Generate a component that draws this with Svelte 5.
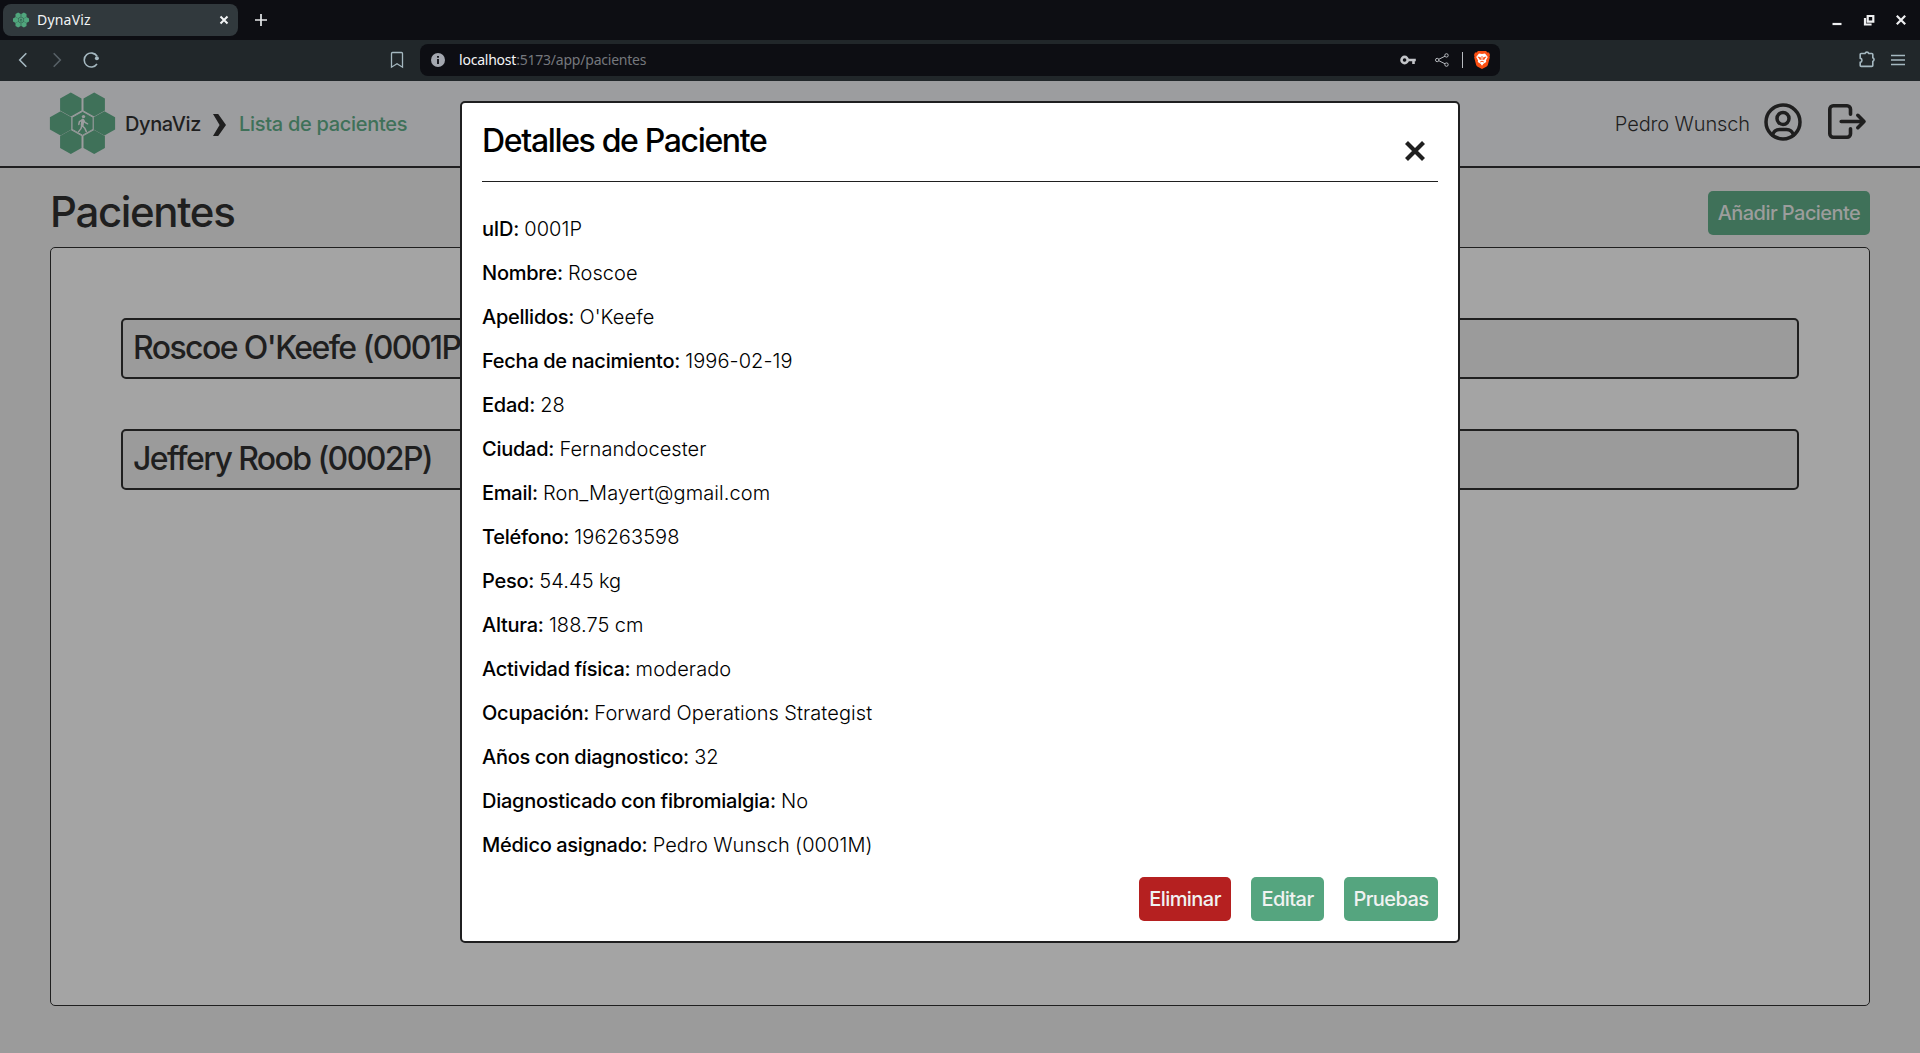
<script>
  const details = [
    ['uID', '0001P'],
    ['Nombre', 'Roscoe'],
    ['Apellidos', "O'Keefe"],
    ['Fecha de nacimiento', '1996-02-19'],
    ['Edad', '28'],
    ['Ciudad', 'Fernandocester'],
    ['Email', 'Ron_Mayert@gmail.com'],
    ['Teléfono', '196263598'],
    ['Peso', '54.45 kg'],
    ['Altura', '188.75 cm'],
    ['Actividad física', 'moderado'],
    ['Ocupación', 'Forward Operations Strategist'],
    ['Años con diagnostico', '32'],
    ['Diagnosticado con fibromialgia', 'No'],
    ['Médico asignado', 'Pedro Wunsch (0001M)']
  ];
  const patients = ["Roscoe O'Keefe (0001P)", 'Jeffery Roob (0002P)'];
  const cells = [[20.8, 12.5], [44.2, 12.5], [10.6, 31.3], [32.6, 31.3], [54.4, 31.3], [20.8, 50], [44.2, 50]];
  const hex = ([x, y]) =>
    `${x},${y - 12.1} ${x + 10.7},${y - 6.1} ${x + 10.7},${y + 6.1} ${x},${y + 12.1} ${x - 10.7},${y + 6.1} ${x - 10.7},${y - 6.1}`;
</script>

{#snippet logo()}
  <svg class="logo" viewBox="0 0 65 62.5">
    {#each cells as cell}<polygon points={hex(cell)} />{/each}
    <polygon class="ring" points="32.6,19.4 43.1,25.3 43.1,37.3 32.6,43.2 22.1,37.3 22.1,25.3" />
    <g class="walker">
      <circle cx="33.5" cy="24.6" r="1.7" />
      <path d="M32.6 27.6L31.8 33.2L34.8 36.2L36.3 39.6M31.8 33.5L31 36.6L28.6 39.6M32.4 27.8L29.4 29.6L28.8 32.4M33.4 28L34.9 30.4L37.6 31.8" />
      <path class="torso" d="M32.8 28.2L32.2 33" />
    </g>
  </svg>
{/snippet}

<div class="window">
  <div class="tabs">
    <div class="tab">
      {@render logo()}
      <span>DynaViz</span>
      <svg class="tab-close" viewBox="0 0 10 10"><path d="M1.5 1.5l7 7M8.5 1.5l-7 7" /></svg>
    </div>
    <svg class="plus" viewBox="0 0 12 12"><path d="M6 0v12M0 6h12" /></svg>
    <div class="controls">
      <svg viewBox="0 0 12 12"><path d="M1.5 10h9" /></svg>
      <svg viewBox="0 0 12 12"><path d="M4.7 2h5.6v5.6H4.7zM2 4v6.5h6.6" /></svg>
      <svg viewBox="0 0 12 12"><path d="M1.8 1.8l8.4 8.4M10.2 1.8l-8.4 8.4" /></svg>
    </div>
  </div>

  <div class="toolbar">
    <div class="nav">
      <svg viewBox="0 0 16 16"><path d="M11.3 1.2L4.7 8l6.6 6.8" /></svg>
      <svg class="dim" viewBox="0 0 16 16"><path d="M4.7 1.2L11.3 8l-6.6 6.8" /></svg>
      <svg viewBox="0 0 16 16"><path d="M14.1 4.2A7 7 0 1 0 14 12" /><circle class="solid" cx="13.9" cy="6.2" r="2" /></svg>
    </div>
    <svg class="bookmark" viewBox="0 0 16 18"><path d="M3.5 1.5h9a1 1 0 0 1 1 1v13.7L8 12.8l-5.5 3.4V2.5a1 1 0 0 1 1-1z" /></svg>
    <div class="address">
      <svg class="info" viewBox="0 0 14 14"><circle cx="7" cy="7" r="7" /><path d="M7 6v5M7 3v1.8" /></svg>
      <span class="url"><b>localhost</b>:5173/app/pacientes</span>
      <svg class="key" viewBox="0 0 16 10"><circle cx="4.6" cy="5" r="3.1" /><path d="M7 5h8.8M13.5 5v4" /></svg>
      <svg class="share" viewBox="0 0 14 14"><circle cx="2.2" cy="7" r="1.7" /><circle cx="11.5" cy="2.4" r="1.7" /><circle cx="11.5" cy="11.6" r="1.7" /><path d="M3.8 6.3l6.2-3.1M3.8 7.7l6.2 3.1" /></svg>
      <i></i>
      <svg class="shield" viewBox="0 0 16 18">
        <path d="M4 0h8l1.5 1.5L15 1.4l1 2.7-.5 1.2.3 1.2-1.9 7.2c-.3 1-.8 1.6-1.6 2.1L8 18l-4.3-2.2c-.8-.5-1.3-1.1-1.6-2.1L.2 6.5l.3-1.2L0 4.1l1-2.7 1.5.1z" />
        <path class="face" d="M5 2.6l3 .5 3-.5 2.8 3.3-1.8 3.3.2 1.7-3 2.1L8 14.7 6.8 13l-3-2.1.2-1.7L2.2 5.9z" />
        <path class="lines" d="M3.8 6l2.7.7L6.2 9M12.2 6l-2.7.7.3 2.3M6.2 11L8 10.2l1.8.8M8 5v4" />
      </svg>
    </div>
    <svg class="puzzle" viewBox="0 0 18 18"><path d="M3.2 3.5H7a2 2 0 0 1 3.8 0h3a1 1 0 0 1 1 1v3.2a2 2 0 0 1 0 3.7v4a1 1 0 0 1-1 1H3.2a1 1 0 0 1-1-1v-3a2.2 2.2 0 0 0 0-4.3V4.5a1 1 0 0 1 1-1z" /></svg>
    <svg class="menu" viewBox="0 0 14 12"><path d="M0 1.5h14M0 6h14M0 10.5h14" /></svg>
  </div>

  <header>
    {@render logo()}
    <span class="brand">DynaViz</span>
    <svg class="chevron" viewBox="0 0 13 22"><path d="M0 0h5.2L13 11 5.2 22H0L6.6 11z" /></svg>
    <span class="crumb">Lista de pacientes</span>
    <span class="user">Pedro Wunsch</span>
    <svg class="avatar" viewBox="0 0 38 38"><circle cx="19" cy="19" r="17" /><circle cx="19" cy="15.4" r="6" /><path d="M8.5 32c1.2-3.6 3.4-5.4 7-5.4h7c3.6 0 5.8 1.8 7 5.4" /></svg>
    <svg class="logout" viewBox="0 0 38 35"><path d="M22.5 10.3V5.2a3.4 3.4 0 0 0-3.4-3.4H5.2a3.4 3.4 0 0 0-3.4 3.4v24.6a3.4 3.4 0 0 0 3.4 3.4h13.9a3.4 3.4 0 0 0 3.4-3.4v-5.1M13.2 17.5h22.5M29.8 11.3l6.2 6.2-6.2 6.2" /></svg>
  </header>

  <main>
    <div class="heading">
      <h1>Pacientes</h1>
      <button class="add">Añadir Paciente</button>
    </div>
    <section>
      {#each patients as patient}<div class="patient">{patient}</div>{/each}
    </section>
  </main>

  <div class="modal">
    <div class="modal-head">
      <h2>Detalles de Paciente</h2>
      <svg viewBox="0 0 20 20"><path d="M1.5 1.5l17 17M18.5 1.5l-17 17" /></svg>
    </div>
    <div class="details">
      {#each details as [label, value]}
        <p><strong>{label}:</strong> <span>{value}</span></p>
      {/each}
    </div>
    <div class="actions">
      <button class="danger">Eliminar</button>
      <button class="edit">Editar</button>
      <button class="tests">Pruebas</button>
    </div>
  </div>
</div>

<style>
  :global(body) { margin: 0; overflow: hidden; }
  * { box-sizing: border-box; }
  svg { display: block; flex: none; fill: none; overflow: visible; }
  .window {
    position: relative;
    width: 1920px;
    height: 1053px;
    display: flex;
    flex-direction: column;
    background: #9b9b9b;
    color: #1f1f1f;
    font-family: Inter, Roboto, sans-serif;
    font-weight: 300;
  }

  .logo { fill: #3f7159; }
  .ring { fill: none; stroke: #9c9d9f; stroke-width: 0.9; }
  .walker circle { fill: #9c9d9f; }
  .walker path { stroke: #9c9d9f; stroke-width: 1.5; stroke-linecap: round; stroke-linejoin: round; fill: none; }
  .walker .torso { stroke-width: 3; }

  .tabs { height: 40px; display: flex; align-items: center; background: #0d0e13; padding: 0 12px 0 3px; }
  .tab {
    width: 235px; height: 32px; display: flex; align-items: center; padding: 0 9px 0 10px;
    border-radius: 8px; background: #31393d; color: #f2f4f5;
    font: 400 14px "Noto Sans", sans-serif;
  }
  .tab span { margin-top: -1px; letter-spacing: 0.2px; }
  .tab .logo { width: 16px; height: 16px; margin-right: 8px; fill: #50a67d; }
  .tab .ring, .tab .walker path { stroke: #31584c; }
  .tab-close { width: 10px; height: 10px; margin-left: auto; stroke: #f2f4f5; stroke-width: 2; }
  .plus { width: 12px; height: 12px; margin-left: 17px; stroke: #e6e8ea; stroke-width: 1.7; }
  .controls { display: flex; gap: 20px; margin-left: auto; margin-right: 1px; }
  .controls svg { width: 12px; height: 12px; stroke: #eeeff1; stroke-width: 2.2; }

  .toolbar { height: 41px; display: flex; align-items: center; background: #21272a; padding: 0 15px 1px; }
  .toolbar svg { stroke: #a5b8c0; stroke-width: 1.3; }
  .nav { display: flex; gap: 18px; width: 374px; }
  .nav svg { width: 16px; height: 16px; stroke-width: 1.6; }
  .nav .dim { stroke: #576066; }
  .nav .solid { fill: #a5b8c0; stroke: none; }
  .bookmark { width: 16px; height: 18px; }
  .address {
    width: 1080px; height: 32px; margin-left: 15px; padding: 0 10px 0 11px;
    display: flex; align-items: center; border-radius: 8px; background: #0d0e13;
  }
  .address .info { width: 14px; height: 14px; fill: #a3a7af; stroke: none; }
  .address .info path { stroke: #0d0e13; stroke-width: 1.8; }
  .url { margin: -1px 0 0 14px; font: 400 14px "Noto Sans", sans-serif; letter-spacing: -0.22px; color: #75787d; }
  .url b { font-weight: 400; color: #f5f5f7; }
  .address .key { width: 16px; height: 10px; margin-left: auto; stroke: #c2c4c8; stroke-width: 2.6; }
  .address .share { width: 14px; height: 14px; margin: 0 13px 0 19px; stroke: #b7babf; stroke-width: 1; }
  .address i { width: 1px; height: 16px; background: #b7babf; margin-right: 11px; }
  .address .shield { width: 16px; height: 18px; fill: #fb4f12; stroke: none; }
  .address .face { fill: #fff; }
  .address .lines { stroke: #fb4f12; stroke-width: 0.9; }
  .puzzle { width: 18px; height: 18px; margin: -2px 0 0 auto; }
  .toolbar .puzzle { stroke-width: 1.6; }
  .menu { width: 14px; height: 12px; margin: 0 0 0 15px; }

  header { height: 87px; display: flex; align-items: center; padding: 0 54px 0 50px; background: #9c9d9f; border-bottom: 2px solid #1f1f20; font-size: 20px; }
  header .logo { width: 65px; height: 62.5px; }
  .brand { margin-left: 10px; width: 75px; font-weight: 500; white-space: nowrap; letter-spacing: -0.4px; }
  .chevron { width: 13px; height: 22px; margin: 2px 13px 0 13px; fill: #1f1f1f; }
  .crumb { font-weight: 500; letter-spacing: -0.3px; color: #3f7159; }
  .user { margin-left: auto; letter-spacing: -0.12px; }
  .avatar { width: 38px; height: 38px; margin: -4px 26px 0 14px; stroke: #1f1f1f; stroke-width: 3.5; stroke-linecap: round; }
  .logout { width: 38px; height: 35px; margin-top: -4px; stroke: #1f1f1f; stroke-width: 3.6; stroke-linecap: round; stroke-linejoin: round; }

  main { flex: 1; padding: 23px 50px 47px; display: flex; flex-direction: column; }
  .heading { height: 56px; display: flex; justify-content: space-between; }
  h1 { margin: -5px 0 0; font-size: 42px; line-height: 52px; font-weight: 500; letter-spacing: -1.35px; }
  button { height: 44px; padding: 0; border: 0; border-radius: 5px; font: 500 20px Inter, sans-serif; letter-spacing: -0.55px; white-space: nowrap; }
  .add { width: 162px; background: #3f7159; color: #9c9d9c; }
  section { flex: 1; padding: 70px; border: 1px solid #1f1f1f; border-radius: 5px; background: #a4a4a4; display: flex; flex-direction: column; gap: 50px; }
  .patient { height: 61px; padding: 0 10px; border: 2px solid #1f1f1f; border-radius: 5px; background: #9b9b9b; font-size: 32px; line-height: 55px; font-weight: 500; letter-spacing: -1.6px; }

  /* Dialog floating above the page content. */
  .modal {
    position: absolute; left: 460px; top: 101px; width: 1000px; height: 842px; padding: 0 20px 20px;
    display: flex; flex-direction: column; border: 2px solid #1f1f20; border-radius: 5px; background: #fff; color: #000;
  }
  .modal-head { height: 79px; display: flex; justify-content: space-between; border-bottom: 1px solid #1f1f1f; }
  h2 { margin: 16px 0 0; font-size: 32px; line-height: 44px; font-weight: 500; letter-spacing: -1.35px; }
  .modal-head svg { width: 20px; height: 20px; margin: 38px 13px 0 0; stroke: #1f1f1f; stroke-width: 4.2; }
  .details { padding-top: 25px; font-size: 20px; }
  p { margin: 0; line-height: 44px; white-space: nowrap; word-spacing: -0.4px; }
  p span { letter-spacing: 0.08px; }
  strong { font-weight: 500; letter-spacing: -0.25px; }
  .actions { margin-top: auto; display: flex; justify-content: flex-end; gap: 20px; }
  .actions button { color: #f0f2f1; background: #55a57f; }
  .actions .danger { width: 92px; background: #b52020; }
  .edit { width: 73px; }
  .tests { width: 94px; }
</style>
